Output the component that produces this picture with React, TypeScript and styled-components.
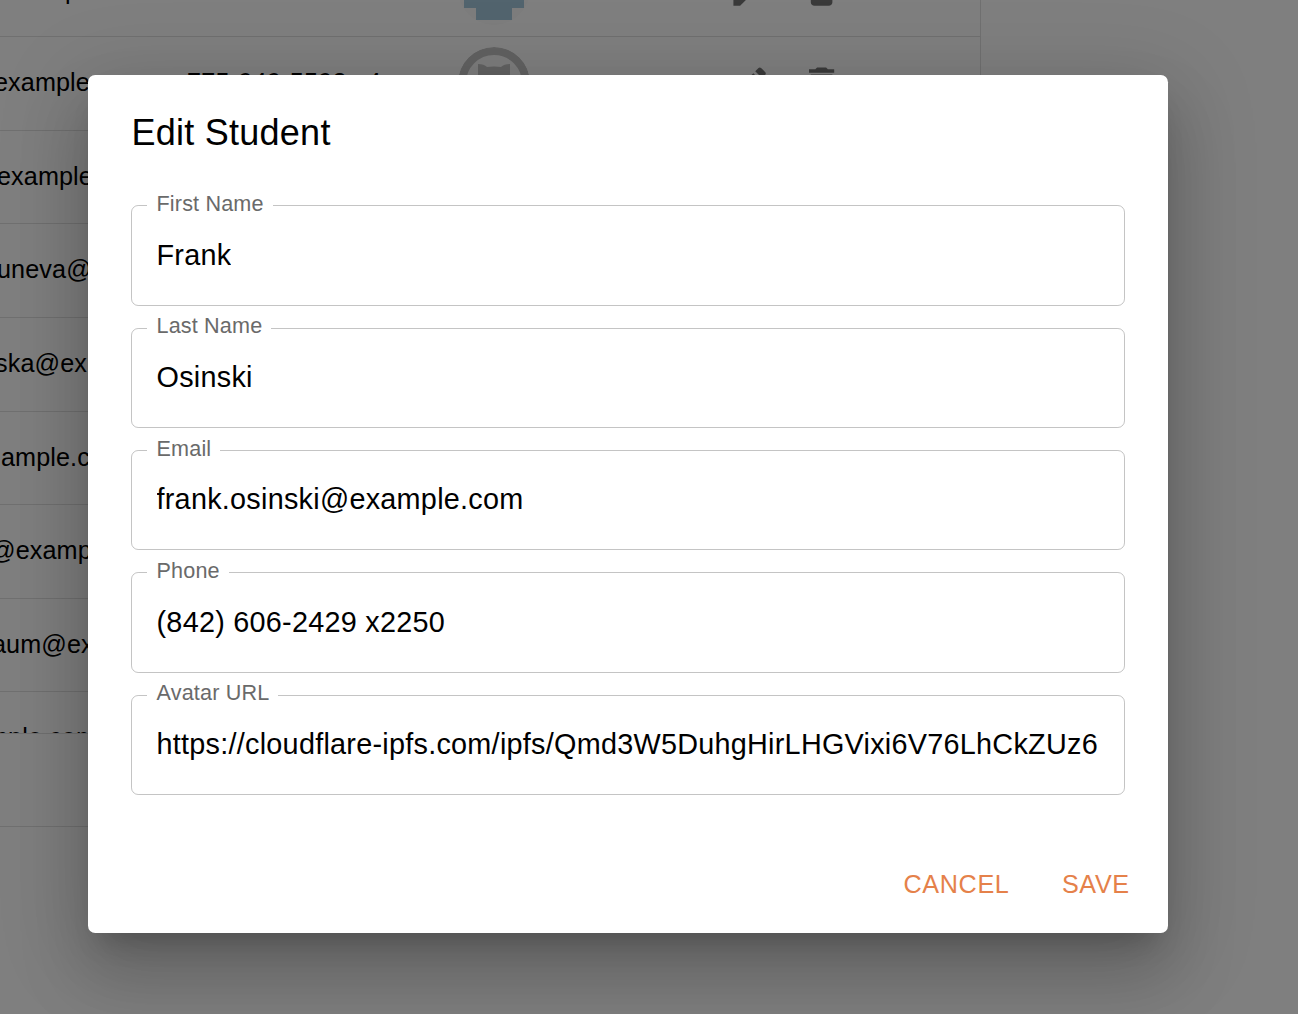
import React from "react";
import styled, { createGlobalStyle } from "styled-components";

const Global = createGlobalStyle`
  * { box-sizing: border-box; }
  body {
    margin: 0;
    background: #fff;
    overflow: hidden;
    font-family: "Liberation Sans", Arial, sans-serif;
  }
`;

const Page = styled.div`
  position: relative;
  height: 1014px;
  overflow: hidden;
`;

const Grid = styled.section`
  width: 981px;
  height: 827px;
  display: flex;
  flex-direction: column;
  border-right: 1px solid #e0e0e0;
  border-bottom: 1px solid #e0e0e0;
`;

const Rows = styled.div`
  height: 734px;
  overflow: hidden;
  border-bottom: 1px solid #e0e0e0;
`;

const Row = styled.div`
  display: grid;
  grid-template-columns: 187px 271px 270px 1fr;
  align-items: center;
  height: 93.6px;
  border-bottom: 1px solid #e0e0e0;
  font-size: 25.2px;
  line-height: 36px;
  letter-spacing: 0.1px;
  color: #000;
  white-space: nowrap;

  &:first-child { margin-top: -56.4px; }
`;

const Email = styled.span<{ $shift: number }>`
  padding-bottom: 2.6px;
  text-indent: ${(p) => p.$shift}px;

  ${Row}:first-child & { padding-bottom: 0; }
  ${Row}:last-child & { padding-bottom: 3.2px; }
`;

const Phone = styled.span`
  padding-bottom: 2.4px;
  letter-spacing: 0.25px;
`;

const Avatar = styled.svg`
  width: 72px;
  height: 72px;
  margin-bottom: 1px;
  border-radius: 50%;
`;

const Actions = styled.span`
  display: flex;
  gap: 28.8px;
`;

const Icon = styled.svg`
  width: 43.2px;
  height: 43.2px;
  fill: rgba(0, 0, 0, 0.54);
`;

const Backdrop = styled.div`
  position: absolute;
  inset: 0;
  padding: 75px 0 0 88px;
  background: rgba(0, 0, 0, 0.5);
`;

const Dialog = styled.div`
  width: 1080px;
  height: 858px;
  display: flex;
  flex-direction: column;
  background: #fff;
  border-radius: 7.2px;
  box-shadow:
    0 19.8px 27px -12.6px rgba(0, 0, 0, 0.2),
    0 43.2px 68.4px 5.4px rgba(0, 0, 0, 0.14),
    0 16.2px 82.8px 14.4px rgba(0, 0, 0, 0.12);
`;

const Title = styled.h2`
  margin: 0;
  padding: 29px 43.5px 0;
  height: 130.25px;
  font-size: 36px;
  font-weight: 400;
  line-height: 57.6px;
  letter-spacing: 0.25px;
  color: #000;
`;

const Fields = styled.div`
  display: flex;
  flex-direction: column;
  gap: 22.05px;
  padding: 0 43px;
`;

const Field = styled.label`
  position: relative;
  display: flex;
  align-items: center;
  height: 100.35px;
  padding: 0 24.5px 0.2px;
  border: 1px solid rgba(0, 0, 0, 0.23);
  border-radius: 7.2px;
`;

const Caption = styled.span`
  position: absolute;
  left: 15px;
  top: -16.4px;
  padding: 0 9px 0 9.5px;
  background: #fff;
  font-size: 21.6px;
  line-height: 27px;
  letter-spacing: 0.16px;
  color: #6a6a6a;
`;

const Value = styled.span`
  overflow: hidden;
  white-space: nowrap;
  font-size: 28.8px;
  line-height: 41.4px;
  letter-spacing: 0.26px;
  color: #000;
`;

const Footer = styled.div`
  display: flex;
  justify-content: flex-end;
  gap: 24px;
  margin-top: auto;
  padding: 0 24px 16.4px;
`;

const Button = styled.button`
  height: 66px;
  padding: 0 14.2px;
  border: 0;
  background: none;
  font: 25.2px/44px "Liberation Sans", Arial, sans-serif;
  letter-spacing: 0.65px;
  color: #e5814a;
`;

const EditIcon = () => (
  <Icon viewBox="0 0 24 24">
    <path d="M3 17.25V21h3.75L17.81 9.94l-3.75-3.75L3 17.25zM20.71 7.04c.39-.39.39-1.02 0-1.41l-2.34-2.34c-.39-.39-1.02-.39-1.41 0l-1.83 1.83 3.75 3.75 1.83-1.83z" />
  </Icon>
);

const DeleteIcon = () => (
  <Icon viewBox="0 0 24 24">
    <path d="M6 19c0 1.1.9 2 2 2h8c1.1 0 2-.9 2-2V7H6v12zM19 4h-3.5l-1-1h-5l-1 1H5v2h14V4z" />
  </Icon>
);

const Identicon = () => (
  <Avatar viewBox="0 0 72 72">
    <rect width="72" height="72" fill="#fafafa" />
    <path d="M6 31h60v24H54v12H18V55H6z" fill="#a5c8dc" />
  </Avatar>
);

const CatAvatar = () => (
  <Avatar viewBox="0 0 72 72">
    <circle cx="36" cy="36" r="32" fill="#fafafa" stroke="#c4c4c4" strokeWidth="8" />
    <path d="M20 17q6 0 9 3q7-1 14 0q3-3 9-3v27q-3 9-16 9t-16-9z" fill="#c4c4c4" />
  </Avatar>
);

const students = [
  { email: "example", shift: 3, phone: "", avatar: <Identicon /> },
  { email: "example", shift: -6, phone: "775-949-5592 x4", avatar: <CatAvatar /> },
  { email: "example", shift: -3 },
  { email: "uneva@", shift: -3 },
  { email: "ska@ex", shift: -5 },
  { email: "ample.c", shift: 1 },
  { email: "@examp", shift: -10 },
  { email: "aum@ex", shift: -8 },
  { email: "mple.com", shift: -13 },
];

const fields = [
  { label: "First Name", value: "Frank" },
  { label: "Last Name", value: "Osinski" },
  { label: "Email", value: "frank.osinski@example.com" },
  { label: "Phone", value: "(842) 606-2429 x2250" },
  { label: "Avatar URL", value: "https://cloudflare-ipfs.com/ipfs/Qmd3W5DuhgHirLHGVixi6V76LhCkZUz6" },
];

export default function App() {
  return (
    <Page>
      <Global />
      <Grid>
        <Rows>
          {students.map((s, i) => (
            <Row key={i}>
              <Email $shift={s.shift}>{s.email}</Email>
              <Phone>{s.phone}</Phone>
              {s.avatar ?? <span />}
              {s.avatar && (
                <Actions>
                  <EditIcon />
                  <DeleteIcon />
                </Actions>
              )}
            </Row>
          ))}
        </Rows>
      </Grid>
      <Backdrop>
        <Dialog role="dialog">
          <Title>Edit Student</Title>
          <Fields>
            {fields.map((f) => (
              <Field key={f.label}>
                <Caption>{f.label}</Caption>
                <Value>{f.value}</Value>
              </Field>
            ))}
          </Fields>
          <Footer>
            <Button>CANCEL</Button>
            <Button>SAVE</Button>
          </Footer>
        </Dialog>
      </Backdrop>
    </Page>
  );
}
